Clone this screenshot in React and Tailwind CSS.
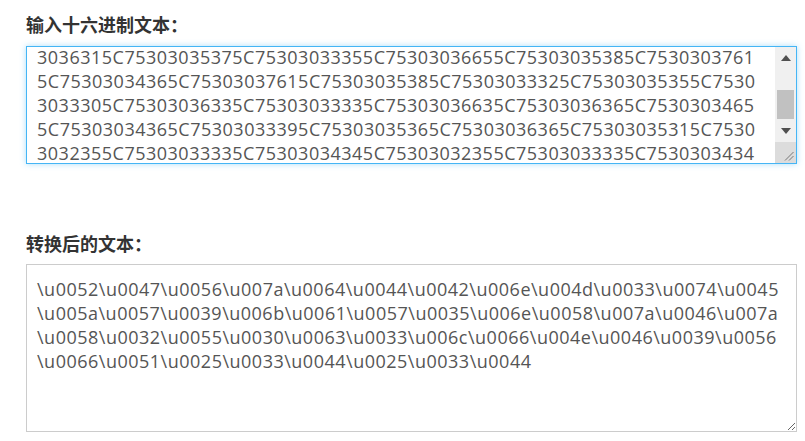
import { useEffect, useRef } from "react"

const escapes = [
  "0052", "0047", "0056", "007a", "0064", "0044", "0042", "006e", "004d", "0033", "0074", "0045",
  "005a", "0057", "0039", "006b", "0061", "0057", "0035", "006e", "0058", "007a", "0046", "007a",
  "0058", "0032", "0055", "0030", "0063", "0033", "006c", "0066", "004e", "0046", "0039", "0056",
  "0066", "0051", "0025", "0033", "0044", "0025", "0033", "0044",
]

function toHex(text) {
  return Array.from(text)
    .map((ch) => ch.charCodeAt(0).toString(16).toUpperCase().padStart(2, "0"))
    .join("")
}

const output = escapes.map((code) => "\\u" + code).join("")
const hex = toHex(output)

// break the hex into rows of 66 chars, same as the wrapped box
const hexRows = []
for (let i = 0; i < hex.length; i += 66) {
  hexRows.push(hex.slice(i, i + 66))
}
const hexValue = hexRows.join("\n")

const outRows = [
  escapes.slice(0, 12),
  escapes.slice(12, 24),
  escapes.slice(24, 36),
  escapes.slice(36),
].map((row) => row.map((code) => "\\u" + code).join(""))
const outValue = outRows.join("\n")

function Arrow({ down }) {
  return (
    <svg width="10" height="6" viewBox="0 0 10 6" className="block">
      {down ? (
        <polygon points="0,0 10,0 5,6" fill="#505050" />
      ) : (
        <polygon points="0,6 10,6 5,0" fill="#505050" />
      )}
    </svg>
  )
}

function Grip() {
  return (
    <svg width="10" height="10" viewBox="0 0 10 10" className="block">
      <line x1="9.5" y1="1" x2="1" y2="9.5" stroke="#777" strokeWidth="1" />
      <line x1="9.5" y1="5" x2="5" y2="9.5" stroke="#777" strokeWidth="1" />
    </svg>
  )
}

export default function App() {
  const inputRef = useRef(null)

  useEffect(() => {
    if (inputRef.current) {
      inputRef.current.scrollTop = 86
    }
  }, [])

  return (
    <div className="flex min-h-[441px] w-[805px] flex-col bg-white pl-[26px] pt-[12px] font-['Open_Sans','Noto_Sans_CJK_SC',sans-serif]">
      <label className="block font-['Noto_Sans_CJK_SC',sans-serif] text-[18px] font-bold leading-[24px] text-[#333]">
        输入十六进制文本：
      </label>
      <div className="relative mt-[10px] h-[118px] w-[771px] border border-[#45b5f5] shadow-[0_0_6px_rgba(69,181,245,0.45)]">
        <textarea
          ref={inputRef}
          readOnly
          value={hexValue}
          className="block h-full w-full resize-none overflow-hidden bg-white px-[10px] py-[12px] font-['Open_Sans',sans-serif] text-[18px] leading-[24px] tracking-[0.5px] text-[#555] outline-none"
        />
        <div className="absolute bottom-0 right-0 top-0 flex w-[21px] flex-col bg-[#f0f0f0]">
          <div className="flex h-[22px] items-center justify-center">
            <Arrow />
          </div>
          <div className="flex flex-1 flex-col justify-end px-[2px] pb-[1px]">
            <div className="h-[29px] bg-[#c1c1c1]" />
          </div>
          <div className="flex h-[22px] items-center justify-center">
            <Arrow down />
          </div>
          <div className="flex h-[21px] items-end justify-end bg-[#dcdcdc] pb-[2px] pr-[2px]">
            <Grip />
          </div>
        </div>
      </div>

      <label className="mt-[67px] block font-['Noto_Sans_CJK_SC',sans-serif] text-[18px] font-bold leading-[24px] text-[#333]">
        转换后的文本：
      </label>
      <textarea
        readOnly
        value={outValue}
        className="mt-[9px] block h-[168px] w-[771px] border border-[#ccc] bg-white px-[10px] py-[12px] font-['Open_Sans',sans-serif] text-[18px] leading-[24px] tracking-[0.5px] text-[#555] outline-none"
      />
    </div>
  )
}
